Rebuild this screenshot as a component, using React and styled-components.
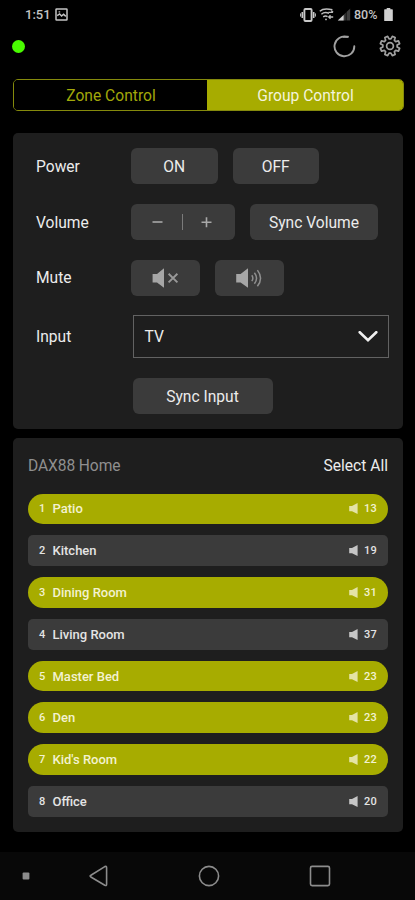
import React from "react";
import styled, { createGlobalStyle } from "styled-components";

const Global = createGlobalStyle`
  * { box-sizing: border-box; }
  html, body { margin: 0; background: #000; }
  body { font-family: Roboto, "Liberation Sans", sans-serif; color: #ececec; }
  button { font: inherit; color: inherit; border: 0; padding: 0; background: none; }
  svg { display: block; flex: none; }
`;

const Screen = styled.div`
  width: 415px;
  height: 900px;
  background: #000;
  display: flex;
  flex-direction: column;
  overflow: hidden;
`;

const StatusBar = styled.div`
  height: 29px;
  padding: 0 22px 0 25px;
  display: flex;
  justify-content: space-between;
  align-items: center;
  color: #c4c4c4;
  font-size: 13px;
  font-weight: 500;
`;

const StatusGroup = styled.div`
  display: flex;
  align-items: center;
  gap: ${(p) => p.$gap}px;
`;

const StatusText = styled.span`
  width: ${(p) => p.$width}px;
  font-size: ${(p) => p.$size}px;
  line-height: 14px;
  letter-spacing: ${(p) => p.$spacing || 0}px;
  white-space: nowrap;
`;

const AppHeader = styled.header`
  height: 34px;
  padding: 0 14px 0 12px;
  display: flex;
  justify-content: space-between;
  align-items: center;
`;

const OnlineDot = styled.span`
  width: 13px;
  height: 13px;
  border-radius: 50%;
  background: #49fb00;
`;

const HeaderActions = styled.div`
  display: flex;
  gap: 23px;
`;

const Tabs = styled.div`
  margin: 16px 11.5px 0 12.5px;
  height: 32px;
  flex: none;
  display: flex;
  border: 1.5px solid #858a0c;
  border-radius: 5px;
  overflow: hidden;
`;

const Tab = styled.button`
  flex: ${(p) => (p.$active ? "0 0 196px" : "1")};
  padding: 1px 0 0 2px;
  font-size: 15.6px;
  color: ${(p) => (p.$active ? "#f4f4dc" : "#a2a80a")};
  background: ${(p) => (p.$active ? "#a7ac00" : "#000")};
`;

const Panel = styled.section`
  margin: ${(p) => p.$top}px 12px 0 13px;
  height: ${(p) => p.$height}px;
  flex: none;
  padding: ${(p) => p.$pad};
  border-radius: 5px;
  background: #1e1e1e;
`;

const ControlRow = styled.div`
  height: ${(p) => p.$height || 36}px;
  margin-bottom: ${(p) => (p.$gap === undefined ? 20 : p.$gap)}px;
  display: flex;
  align-items: center;
`;

const Label = styled.div`
  width: ${(p) => p.$width || 95}px;
  padding-top: 1px;
  font-size: 15.6px;
`;

const ButtonGroup = styled.div`
  display: flex;
  gap: 15px;
`;

const Button = styled.button`
  width: ${(p) => p.$width}px;
  height: 36px;
  padding-top: ${(p) => (p.$icon ? 0 : 1)}px;
  border-radius: 6px;
  background: #3b3b3b;
  font-size: 15.6px;
  display: flex;
  align-items: center;
  justify-content: center;
`;

const Stepper = styled.div`
  width: 104px;
  height: 36px;
  padding-right: 2px;
  border-radius: 6px;
  background: #3b3b3b;
  display: flex;
  align-items: center;
  justify-content: center;
`;

const StepButton = styled.button`
  width: 48px;
  height: 36px;
  display: flex;
  align-items: center;
  justify-content: center;
`;

const StepDivider = styled.span`
  width: 1px;
  height: 16px;
  background: #7b7b7b;
`;

const Select = styled.div`
  width: 256px;
  height: 43px;
  padding: 0 10px 0 11px;
  border: 1.5px solid #626262;
  display: flex;
  align-items: center;
  justify-content: space-between;
  font-size: 15.6px;
`;

const ListHeader = styled.div`
  height: 55.5px;
  display: flex;
  justify-content: space-between;
  align-items: center;
  font-size: 15.6px;
`;

const GroupName = styled.span`
  color: #8f8f8f;
  letter-spacing: -0.1px;
`;

const SelectAll = styled.button`
  letter-spacing: 0;
`;

const ZoneList = styled.div`
  display: flex;
  flex-direction: column;
  gap: 11px;
`;

const Zone = styled.div`
  height: 30.8px;
  padding: 0 11px;
  display: flex;
  align-items: center;
  border-radius: ${(p) => (p.$active ? 16 : 5)}px;
  background: ${(p) => (p.$active ? "#a7ac00" : "#3b3b3b")};
  color: ${(p) => (p.$active ? "#f3f2d0" : "#e4e4e4")};
`;

const ZoneNumber = styled.span`
  width: 13.5px;
  font-size: 11px;
  font-weight: 500;
`;

const ZoneName = styled.span`
  flex: 1;
  font-size: 13px;
  font-weight: 500;
`;

const ZoneVolume = styled.span`
  display: flex;
  align-items: center;
  gap: 6px;
  font-size: 11px;
  font-weight: 500;
  letter-spacing: 0.3px;
`;

const NavBar = styled.nav`
  margin-top: auto;
  height: 48px;
  padding: 0 84px 0 22px;
  display: flex;
  align-items: center;
  background: #080808;
`;

const NavKey = styled.span`
  margin-left: ${(p) => p.$left}px;
`;

const ImageIcon = () => (
  <svg width="13" height="13" viewBox="0 0 13 13" fill="none" stroke="#c4c4c4">
    <rect x="1" y="1" width="11" height="11" rx="0.6" strokeWidth="1.5" />
    <path d="M2.2 7.6 L4.6 6 L6.6 8 L8.6 6.2 L10.8 8.4" strokeWidth="1.5" />
    <path d="M3.6 3.9h1.6" strokeWidth="1.2" />
  </svg>
);

const VibrateIcon = () => (
  <svg width="16" height="14" viewBox="0 0 16 14" fill="none" stroke="#c8c8c8">
    <rect x="4.4" y="1" width="7.2" height="12" rx="1" strokeWidth="1.9" />
    <path d="M2.3 4v6M13.7 4v6" strokeWidth="1.6" />
    <path d="M0.6 5.4v3.2M15.4 5.4v3.2" strokeWidth="1" />
  </svg>
);

const WifiIcon = () => (
  <svg width="15" height="13" viewBox="0 0 15 13" fill="none" stroke="#bdbdbd" strokeWidth="1.5">
    <path d="M0.8 3.2C3.4 0.8 8 0.4 13.4 1.8M2.4 6.2c2-1.7 5-2 7.6-.8M4.2 8.9c1.4-1 3.1-1 4.4-.2" />
    <circle cx="7" cy="11.4" r="0.9" fill="#bdbdbd" stroke="none" />
    <path d="M9.4 4.3h4.6M12.3 2.6l1.8 1.7M14.2 9h-4.4M11.5 7.2l-1.8 1.8l1.8 1.8" strokeWidth="1.3" />
  </svg>
);

const SignalIcon = () => (
  <svg width="14" height="13" viewBox="0 0 14 13">
    <path d="M13.2 0.5V12.5H0.8Z" fill="#3d3d3d" />
    <path d="M6.6 7V12.5H0.8Z" fill="#cfcfcf" />
    <path d="M9.2 4v9" stroke="#080808" strokeWidth="0.8" />
  </svg>
);

const BatteryIcon = () => (
  <svg width="9" height="13" viewBox="0 0 9 13" fill="#d0d0d0">
    <path d="M2.7 0h3.6v1.3H8.2q.6 0 .6.6V12.4q0 .6-.6.6H.8q-.6 0-.6-.6V1.9q0-.6.6-.6H2.7Z" />
  </svg>
);

const RefreshIcon = () => (
  <svg width="23" height="23" viewBox="0 0 23 23" fill="none" stroke="#a0a0a0" strokeWidth="1.9" strokeLinecap="round">
    <path d="M14.2 1.9A9.9 9.9 0 1 0 21.3 11.2" />
    <path d="M10.6 1.9l4.4-.2" />
  </svg>
);

const gearPath = () => {
  const points = [];
  for (let i = 0; i < 8; i += 1) {
    [[-15, 7.2], [-9, 9.9], [9, 9.9], [15, 7.2]].forEach(([offset, radius]) => {
      const angle = ((i * 45 + 22.5 + offset) * Math.PI) / 180;
      points.push(`${(11 + radius * Math.cos(angle)).toFixed(2)} ${(11 + radius * Math.sin(angle)).toFixed(2)}`);
    });
  }
  return `M${points.join("L")}Z`;
};

const GearIcon = () => (
  <svg width="22" height="22" viewBox="0 0 22 22" fill="none" stroke="#a0a0a0" strokeWidth="1.7" strokeLinejoin="round">
    <path d={gearPath()} />
    <circle cx="11" cy="11" r="3.4" />
  </svg>
);

const MinusIcon = () => (
  <svg width="11" height="11" viewBox="0 0 11 11" stroke="#a8a8a8" strokeWidth="1.6">
    <path d="M0.5 5h10" />
  </svg>
);

const PlusIcon = () => (
  <svg width="11" height="11" viewBox="0 0 11 11" stroke="#a8a8a8" strokeWidth="1.6">
    <path d="M0.5 5.3h10M5.5 0.3v10" />
  </svg>
);

const MuteIcon = () => (
  <svg width="27" height="20" viewBox="0 0 27 20">
    <path d="M0.6 6H5L12 0.2V19.8L5 14.6H0.6Z" fill="#a6a6a6" />
    <path d="M16.6 5.8L25.4 14.4M25.4 5.8L16.6 14.4" stroke="#999" strokeWidth="1.9" />
  </svg>
);

const SoundIcon = () => (
  <svg width="27" height="20" viewBox="0 0 27 20">
    <path d="M0.2 6H4.6L12 0.2V19.8L4.6 14.6H0.2Z" fill="#a6a6a6" />
    <path
      d="M15.8 7.3q2.1 2.9 0 5.8M18.4 4.7q4.3 5.5 0 11M21.4 2.1q6.3 8.1 0 16.2"
      fill="none"
      stroke="#8f8f8f"
      strokeWidth="1.5"
    />
  </svg>
);

const ChevronIcon = () => (
  <svg width="20" height="12" viewBox="0 0 20 12" fill="none" stroke="#efefef" strokeWidth="2.6" strokeLinecap="round">
    <path d="M1.7 1.2L10 9.3L18.3 1.2" />
  </svg>
);

const SpeakerIcon = ({ color }) => (
  <svg width="9" height="11" viewBox="0 0 9 11" fill={color}>
    <path d="M0.2 3H3L8.6 0V11L3 8.2H0.2Z" />
  </svg>
);

const BackIcon = () => (
  <svg width="19" height="22" viewBox="0 0 19 22" fill="none" stroke="#8c8c8c" strokeWidth="1.6" strokeLinejoin="round">
    <path d="M1.9 10.2L15.8 1.6Q17.6 0.8 17.6 2.8V19.2Q17.6 21.2 15.8 20.2L1.9 12Q0.3 11.1 1.9 10.2Z" />
  </svg>
);

const HomeIcon = () => (
  <svg width="22" height="22" viewBox="0 0 22 22" fill="none" stroke="#8c8c8c" strokeWidth="1.6">
    <circle cx="11" cy="11" r="9.6" />
  </svg>
);

const RecentsIcon = () => (
  <svg width="22" height="22" viewBox="0 0 22 22" fill="none" stroke="#8c8c8c" strokeWidth="1.6">
    <rect x="1.5" y="1.4" width="19" height="19.2" rx="1.6" />
  </svg>
);

const DotIcon = () => (
  <svg width="8" height="8" viewBox="0 0 8 8">
    <rect x="0.6" y="0.6" width="6.8" height="6.8" rx="1" fill="#8c8c8c" />
  </svg>
);

const zones = [
  { name: "Patio", volume: 13, active: true },
  { name: "Kitchen", volume: 19, active: false },
  { name: "Dining Room", volume: 31, active: true },
  { name: "Living Room", volume: 37, active: false },
  { name: "Master Bed", volume: 23, active: true },
  { name: "Den", volume: 23, active: true },
  { name: "Kid's Room", volume: 22, active: true },
  { name: "Office", volume: 20, active: false },
];

export default function App() {
  return (
    <>
      <Global />
      <Screen>
        <StatusBar>
          <StatusGroup $gap={5}>
            <StatusText $width={25} $size={13}>1:51</StatusText>
            <ImageIcon />
          </StatusGroup>
          <StatusGroup $gap={3}>
            <VibrateIcon />
            <WifiIcon />
            <SignalIcon />
            <StatusText $width={27} $size={12.5}>80%</StatusText>
            <BatteryIcon />
          </StatusGroup>
        </StatusBar>
        <AppHeader>
          <OnlineDot />
          <HeaderActions>
            <RefreshIcon />
            <GearIcon />
          </HeaderActions>
        </AppHeader>
        <Tabs>
          <Tab>Zone Control</Tab>
          <Tab $active>Group Control</Tab>
        </Tabs>
        <Panel $top={22} $height={296} $pad="15px 14.5px 0 23px">
          <ControlRow>
            <Label>Power</Label>
            <ButtonGroup>
              <Button $width={86.5}>ON</Button>
              <Button $width={86.5}>OFF</Button>
            </ButtonGroup>
          </ControlRow>
          <ControlRow $gap={19.5}>
            <Label>Volume</Label>
            <ButtonGroup>
              <Stepper>
                <StepButton><MinusIcon /></StepButton>
                <StepDivider />
                <StepButton><PlusIcon /></StepButton>
              </Stepper>
              <Button $width={128}>Sync Volume</Button>
            </ButtonGroup>
          </ControlRow>
          <ControlRow $gap={19.5}>
            <Label>Mute</Label>
            <ButtonGroup>
              <Button $icon $width={69}><MuteIcon /></Button>
              <Button $icon $width={69}><SoundIcon /></Button>
            </ButtonGroup>
          </ControlRow>
          <ControlRow $height={43}>
            <Label $width={96.5}>Input</Label>
            <Select>
              TV
              <ChevronIcon />
            </Select>
          </ControlRow>
          <ControlRow $gap={0}>
            <Label $width={96.5} />
            <Button $width={140}>Sync Input</Button>
          </ControlRow>
        </Panel>
        <Panel $top={9} $height={394} $pad="0 15px 0 15px">
          <ListHeader>
            <GroupName>DAX88 Home</GroupName>
            <SelectAll>Select All</SelectAll>
          </ListHeader>
          <ZoneList>
            {zones.map((zone, index) => (
              <Zone key={zone.name} $active={zone.active}>
                <ZoneNumber>{index + 1}</ZoneNumber>
                <ZoneName>{zone.name}</ZoneName>
                <ZoneVolume>
                  <SpeakerIcon color={zone.active ? "#e4e3a6" : "#c6c6c6"} />
                  {zone.volume}
                </ZoneVolume>
              </Zone>
            ))}
          </ZoneList>
        </Panel>
        <NavBar>
          <NavKey $left={0}><DotIcon /></NavKey>
          <NavKey $left={59}><BackIcon /></NavKey>
          <NavKey $left={90}><HomeIcon /></NavKey>
          <NavKey $left={89}><RecentsIcon /></NavKey>
        </NavBar>
      </Screen>
    </>
  );
}
